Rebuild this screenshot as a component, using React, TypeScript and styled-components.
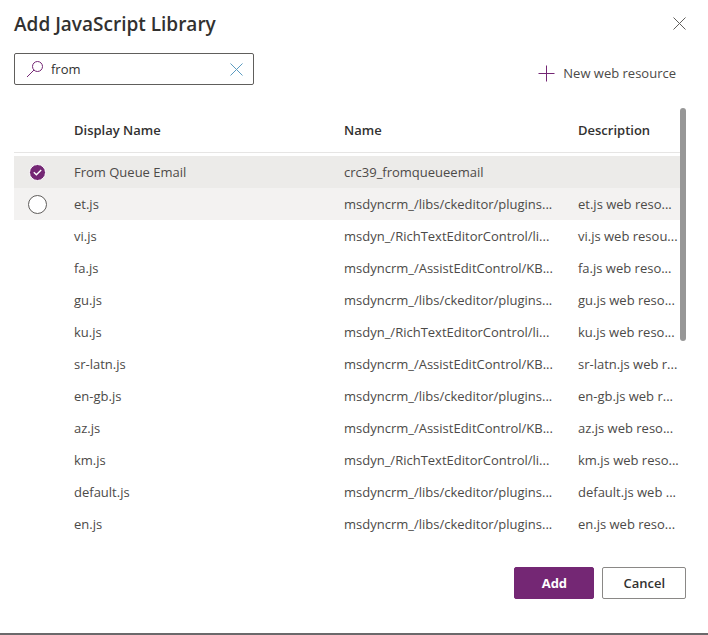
import React, { useState } from "react";
import styled, { createGlobalStyle, css } from "styled-components";

const colors = {
  text: "#323130",
  muted: "#4c4a48",
  brand: "#742774",
  border: "#605e5c",
  buttonBorder: "#8a8886",
  divider: "#e6e5e4",
  selected: "#ecebe9",
  hovered: "#f3f2f1",
  scrollThumb: "#979797",
};

const GlobalStyle = createGlobalStyle`
  *, *::before, *::after { box-sizing: border-box; }
  body {
    margin: 0;
    background: #ffffff;
    color: ${colors.text};
    font-family: "Segoe UI", "Open Sans", "Noto Sans", sans-serif;
    font-size: 13px;
    line-height: 20px;
  }
  button, input { font: inherit; color: inherit; }
`;

const Dialog = styled.main`
  display: flex;
  flex-direction: column;
  padding: 8px 22px 34px 14px;
  border-bottom: 2px solid #6b696b;
`;

const TitleBar = styled.header`
  display: flex;
  align-items: flex-start;
  justify-content: space-between;
  height: 32px;
`;

const Title = styled.h1`
  margin: 0;
  font-size: 19px;
  line-height: 32px;
  font-weight: 600;
`;

const IconButton = styled.button`
  display: flex;
  align-items: center;
  justify-content: center;
  height: 30px;
  padding: 0;
  border: 0;
  background: transparent;
  cursor: pointer;
`;

const CommandRow = styled.div`
  display: flex;
  justify-content: space-between;
  align-items: flex-start;
  height: 55px;
  margin-top: 13px;
`;

const SearchBox = styled.label`
  display: flex;
  align-items: center;
  gap: 7px;
  width: 240px;
  height: 32px;
  padding: 0 10px 0 11px;
  border: 1px solid ${colors.border};
  border-radius: 2px;
  svg { flex: none; }
`;

const SearchInput = styled.input`
  flex: 1;
  min-width: 0;
  padding: 0;
  border: 0;
  outline: 0;
  background: transparent;
`;

const NewResource = styled.button`
  display: flex;
  align-items: center;
  gap: 8px;
  height: 40px;
  padding: 0 10px 0 0;
  border: 0;
  background: transparent;
  color: ${colors.muted};
  cursor: pointer;
`;

const ListArea = styled.section`
  display: flex;
  align-items: flex-start;
`;

const Table = styled.table`
  flex: 1;
  min-width: 0;
  table-layout: fixed;
  border-spacing: 0;
`;

const Column = styled.col<{ $width?: string }>`
  width: ${(p) => p.$width ?? "auto"};
`;

const HeaderCell = styled.th`
  padding: 0 0 3px;
  text-align: left;
  font-weight: 600;
`;

const HeaderLabel = styled.div`
  height: 45px;
  line-height: 44px;
  border-bottom: 1px solid ${colors.divider};
`;

const Radio = styled.input`
  appearance: none;
  display: block;
  width: 19px;
  height: 19px;
  margin: 0;
  border: 1px solid ${colors.border};
  border-radius: 50%;
  background: #ffffff;
  &:checked {
    width: 17px;
    height: 17px;
    border: 1px solid #ffffff;
    background: ${colors.brand};
  }
`;

const RadioWrap = styled.span`
  display: grid;
  width: 19px;
  height: 19px;
  margin-left: 14px;
  > * { grid-area: 1 / 1; place-self: center; }
  svg { pointer-events: none; z-index: 1; }
`;

const Row = styled.tr<{ $selected: boolean; $active: boolean }>`
  height: 32px;
  color: ${colors.muted};
  ${Radio} { opacity: 0; }
  &:hover { background: ${colors.hovered}; }
  &:hover ${Radio} { opacity: 1; }
  ${(p) =>
    p.$active &&
    css`
      background: ${colors.hovered};
      ${Radio} { opacity: 1; }
    `}
  ${(p) =>
    p.$selected &&
    css`
      &, &:hover { background: ${colors.selected}; }
      ${Radio} { opacity: 1; }
    `}
`;

const Cell = styled.td`
  padding: 0;
  white-space: nowrap;
`;

const ScrollThumb = styled.div`
  flex: none;
  width: 6px;
  height: 233px;
  border-radius: 3px;
  background: ${colors.scrollThumb};
`;

const Footer = styled.footer`
  display: flex;
  justify-content: flex-end;
  gap: 8px;
  margin-top: 27px;
`;

const Button = styled.button<{ $primary?: boolean }>`
  min-width: 80px;
  height: 32px;
  padding: 0 20px;
  border: 1px solid ${(p) => (p.$primary ? colors.brand : colors.buttonBorder)};
  border-radius: 2px;
  background: ${(p) => (p.$primary ? colors.brand : "#ffffff")};
  color: ${(p) => (p.$primary ? "#ffffff" : colors.text)};
  font-weight: ${(p) => (p.$primary ? 700 : 600)};
  cursor: pointer;
`;

const CrossIcon = ({ color }: { color: string }) => (
  <svg width="13" height="13" viewBox="0 0 13 13" fill="none" stroke={color} aria-hidden="true">
    <path d="M0.5 0.5L12.5 12.5M12.5 0.5L0.5 12.5" />
  </svg>
);

const SearchIcon = () => (
  <svg width="18" height="18" viewBox="0 0 18 18" fill="none" stroke={colors.brand} aria-hidden="true">
    <circle cx="11.5" cy="6.5" r="5" />
    <path d="M8 10L1 17" />
  </svg>
);

const PlusIcon = () => (
  <svg width="17" height="17" viewBox="0 0 17 17" fill="none" stroke={colors.brand} aria-hidden="true">
    <path d="M8.5 0.5V16.5M0.5 8.5H16.5" />
  </svg>
);

const CheckIcon = () => (
  <svg width="9" height="7" viewBox="0 0 9 7" fill="none" stroke="#ffffff" strokeWidth="1.4" aria-hidden="true">
    <path d="M0.8 3.2L3.4 5.8L8.2 1" />
  </svg>
);

const ckeditor = "msdyncrm_/libs/ckeditor/plugins...";
const richText = "msdyn_/RichTextEditorControl/li...";
const assistEdit = "msdyncrm_/AssistEditControl/KB...";

const resources = [
  { display: "From Queue Email", name: "crc39_fromqueueemail", description: "" },
  { display: "et.js", name: ckeditor, description: "et.js web reso..." },
  { display: "vi.js", name: richText, description: "vi.js web resou..." },
  { display: "fa.js", name: assistEdit, description: "fa.js web reso..." },
  { display: "gu.js", name: ckeditor, description: "gu.js web reso..." },
  { display: "ku.js", name: richText, description: "ku.js web reso..." },
  { display: "sr-latn.js", name: assistEdit, description: "sr-latn.js web r..." },
  { display: "en-gb.js", name: ckeditor, description: "en-gb.js web r..." },
  { display: "az.js", name: assistEdit, description: "az.js web reso..." },
  { display: "km.js", name: richText, description: "km.js web reso..." },
  { display: "default.js", name: ckeditor, description: "default.js web ..." },
  { display: "en.js", name: ckeditor, description: "en.js web reso..." },
];

export default function App() {
  const [query, setQuery] = useState("from");
  const [selected, setSelected] = useState(0);
  const active = 1;

  return (
    <>
      <GlobalStyle />
      <Dialog>
        <TitleBar>
          <Title>Add JavaScript Library</Title>
          <IconButton type="button" aria-label="Close">
            <CrossIcon color={colors.border} />
          </IconButton>
        </TitleBar>
        <CommandRow>
          <SearchBox>
            <SearchIcon />
            <SearchInput
              type="text"
              aria-label="Search"
              value={query}
              onChange={(e) => setQuery(e.target.value)}
            />
            <IconButton type="button" aria-label="Clear search" onClick={() => setQuery("")}>
              <CrossIcon color="#5b9bc0" />
            </IconButton>
          </SearchBox>
          <NewResource type="button">
            <PlusIcon />
            New web resource
          </NewResource>
        </CommandRow>
        <ListArea>
          <Table>
            <colgroup>
              <Column $width="60px" />
              <Column $width="270px" />
              <Column $width="234px" />
              <Column />
            </colgroup>
            <thead>
              <tr>
                <HeaderCell aria-label="Selection"><HeaderLabel /></HeaderCell>
                <HeaderCell scope="col"><HeaderLabel>Display Name</HeaderLabel></HeaderCell>
                <HeaderCell scope="col"><HeaderLabel>Name</HeaderLabel></HeaderCell>
                <HeaderCell scope="col"><HeaderLabel>Description</HeaderLabel></HeaderCell>
              </tr>
            </thead>
            <tbody>
              {resources.map((r, i) => (
                <Row key={r.display} $selected={i === selected} $active={i === active}>
                  <Cell>
                    <RadioWrap>
                      <Radio
                        type="radio"
                        name="resource"
                        aria-label={r.display}
                        checked={i === selected}
                        onChange={() => setSelected(i)}
                      />
                      {i === selected && <CheckIcon />}
                    </RadioWrap>
                  </Cell>
                  <Cell>{r.display}</Cell>
                  <Cell>{r.name}</Cell>
                  <Cell>{r.description}</Cell>
                </Row>
              ))}
            </tbody>
          </Table>
          <ScrollThumb />
        </ListArea>
        <Footer>
          <Button type="button" $primary>Add</Button>
          <Button type="button">Cancel</Button>
        </Footer>
      </Dialog>
    </>
  );
}
